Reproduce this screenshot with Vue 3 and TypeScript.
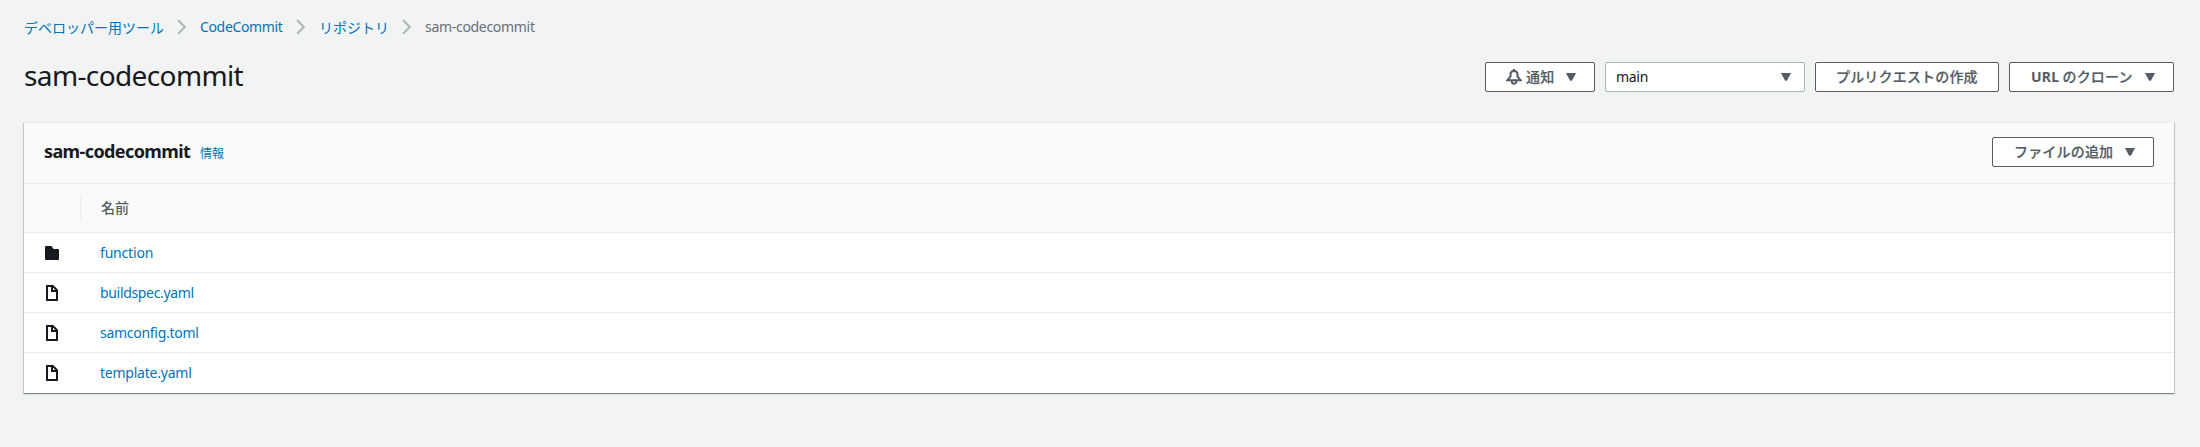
<script setup lang="ts">
interface Crumb { text: string; kind: string }
interface Entry { name: string; kind: 'folder' | 'file'; id: string }

const crumbs: Crumb[] = [
  { text: 'デベロッパー用ツール', kind: 'jp tools' },
  { text: 'CodeCommit', kind: 'service' },
  { text: 'リポジトリ', kind: 'jp repos' },
]
const entries: Entry[] = [
  { name: 'function', kind: 'folder', id: 'fn' },
  { name: 'buildspec.yaml', kind: 'file', id: 'build' },
  { name: 'samconfig.toml', kind: 'file', id: 'config' },
  { name: 'template.yaml', kind: 'file', id: 'template' },
]
</script>

<template>
  <main class="page">
    <nav class="crumbs">
      <template v-for="c in crumbs" :key="c.text">
        <a class="crumb" :class="c.kind">{{ c.text }}</a>
        <svg class="chevron" width="10" height="16" viewBox="0 0 10 16"><path d="M1.200 1.200 7.800 8l-6.600 6.800" /></svg>
      </template>
      <span class="current">sam-codecommit</span>
    </nav>

    <header class="top">
      <h1>sam-codecommit</h1>
      <div class="actions">
        <button class="btn notify">
          <svg class="bell" width="16" height="16" viewBox="0 0 16 16">
            <path d="M8 0v2M8 1.900C5.700 1.900 4.500 3.400 4.500 5.500V7.600L1.400 11.200H14.600L11.500 7.600V5.500C11.500 3.400 10.300 1.900 8 1.900z" />
            <path d="M5.700 12c0 1.700.9 2.700 2.300 2.700s2.300-1 2.300-2.700" />
          </svg>
          <span class="label">通知</span>
          <svg class="caret" width="10" height="8" viewBox="0 0 10 8"><path d="M0 0h10L6.200 7.300q-1.200 1.100-2.400 0z" /></svg>
        </button>
        <div class="select">
          <span>main</span>
          <svg class="caret" width="10" height="8" viewBox="0 0 10 8"><path d="M0 0h10L6.200 7.300q-1.200 1.100-2.400 0z" /></svg>
        </div>
        <button class="btn pull"><span class="label">プルリクエストの作成</span></button>
        <button class="btn clone">
          <span class="label"><span class="url">URL</span> のクローン</span>
          <svg class="caret" width="10" height="8" viewBox="0 0 10 8"><path d="M0 0h10L6.200 7.300q-1.200 1.100-2.400 0z" /></svg>
        </button>
      </div>
    </header>

    <section class="panel">
      <div class="panel-head">
        <h2>sam-codecommit</h2>
        <a class="info">情報</a>
        <button class="btn add">
          <span class="label">ファイルの追加</span>
          <svg class="caret" width="10" height="8" viewBox="0 0 10 8"><path d="M0 0h10L6.200 7.300q-1.200 1.100-2.400 0z" /></svg>
        </button>
      </div>
      <div class="columns"><span class="divider"></span><span class="col">名前</span></div>
      <div v-for="e in entries" :key="e.id" class="row">
        <span class="icon">
          <svg v-if="e.kind === 'folder'" width="14" height="14" viewBox="0 0 14 14">
            <path class="solid" d="M1 0h5.500L8.500 3H13q1 0 1 1v9q0 1-1 1H1q-1 0-1-1V1q0-1 1-1z" />
          </svg>
          <svg v-else class="file" width="12" height="16" viewBox="0 0 12 16">
            <path d="M1 1h5.800L11 5.200V15H1z" /><path d="M6 1v5h5" />
          </svg>
        </span>
        <a :class="e.id">{{ e.name }}</a>
      </div>
    </section>
  </main>
</template>

<style>
html, body { margin: 0; background: #f2f3f3; }
</style>

<style scoped>
.page {
  box-sizing: border-box;
  height: 447px;
  padding: 17px 26px 0 24px;
  background: #f2f3f3;
  color: #16191f;
  font: 14px/20px "Noto Sans", "Noto Sans CJK JP", sans-serif;
  white-space: nowrap;
  overflow: hidden;
}
a { color: #0073bb; }
.crumbs { display: flex; align-items: center; height: 20px; }
.crumb, .current { flex: none; }
.jp { font-family: "Noto Sans CJK JP", sans-serif; font-weight: 400; padding-bottom: 1px; }
.tools { width: 140px; }
.repos { width: 70px; }
.service { width: 83px; letter-spacing: -.35px; }
.chevron { margin: 0 13px; flex: none; }
.chevron path { fill: none; stroke: #aab7b8; stroke-width: 2; }
.current { color: #687078; letter-spacing: -.3px; }
.top { display: flex; justify-content: space-between; margin-top: 25px; height: 30px; }
h1 { margin: 0; font-size: 28px; line-height: 27px; font-weight: 400; letter-spacing: -.62px; }
.actions { display: flex; gap: 10px; }
.btn, .select {
  box-sizing: border-box;
  height: 30px;
  display: flex;
  align-items: center;
  border: 1px solid #545b64;
  border-radius: 2px;
  background: #fff;
  padding: 0 19px 0 20px;
  font: 500 14px/20px "Noto Sans CJK JP", sans-serif;
  color: #545b64;
}
.label { flex: none; line-height: 20px; padding-bottom: 2px; letter-spacing: .18px; -webkit-text-stroke: .2px #545b64; }
.caret { flex: none; fill: #545b64; margin-left: auto; }
.bell { flex: none; fill: none; stroke: #545b64; stroke-width: 2; margin-right: 4px; }
.notify { width: 110px; padding-right: 18px; }
.select { width: 200px; border-color: #aab7b8; padding: 0 13px 0 10px; color: #16191f; font: 14px/20px "Noto Sans", sans-serif; letter-spacing: -.3px; }
.pull { width: 184px; }
.clone { width: 165px; padding-left: 21px; padding-right: 18px; }
.url { font-family: "Noto Sans", sans-serif; font-weight: 700; -webkit-text-stroke: 0; }
.panel {
  margin-top: 30px;
  background: #fff;
  border-top: 1px solid #eaeded;
  box-shadow: 0 1px 1px 0 rgba(0, 28, 36, .3), 1px 1px 1px 0 rgba(0, 28, 36, .15), -1px 1px 1px 0 rgba(0, 28, 36, .15);
}
.panel-head {
  box-sizing: border-box;
  height: 61px;
  display: flex;
  align-items: center;
  padding: 0 20px 2px;
  background: #fafafa;
  border-bottom: 1px solid #eaeded;
}
h2 { margin: 0; width: 156px; padding-bottom: 2px; font-size: 18px; line-height: 22px; font-weight: 700; letter-spacing: -.6px; }
.info { font: 400 12px/18px "Noto Sans CJK JP", sans-serif; padding-top: 1px; }
.add { width: 162px; margin-left: auto; padding-left: 21px; padding-right: 18px; }
.columns { display: flex; align-items: center; height: 48px; background: #fafafa; border-bottom: 1px solid #eaeded; }
.divider { width: 1px; height: 24px; margin-left: 56px; background: #eaeded; }
.col { margin-left: 20px; padding-bottom: 2px; color: #545b64; font: 500 14px/20px "Noto Sans CJK JP", sans-serif; }
.row { display: flex; align-items: center; height: 39px; border-bottom: 1px solid #eaeded; }
.row:last-child { border-bottom: 0; height: 40px; }
.icon { width: 36px; padding-left: 21px; margin-right: 19px; display: flex; }
.icon svg { flex: none; }
.icon .file { margin-left: 1px; fill: none; stroke: #16191f; stroke-width: 2; }
.solid { fill: #16191f; }
.fn { letter-spacing: -.18px; }
.build { letter-spacing: -.33px; }
.config { letter-spacing: -.28px; }
.template { letter-spacing: -.23px; }
</style>
